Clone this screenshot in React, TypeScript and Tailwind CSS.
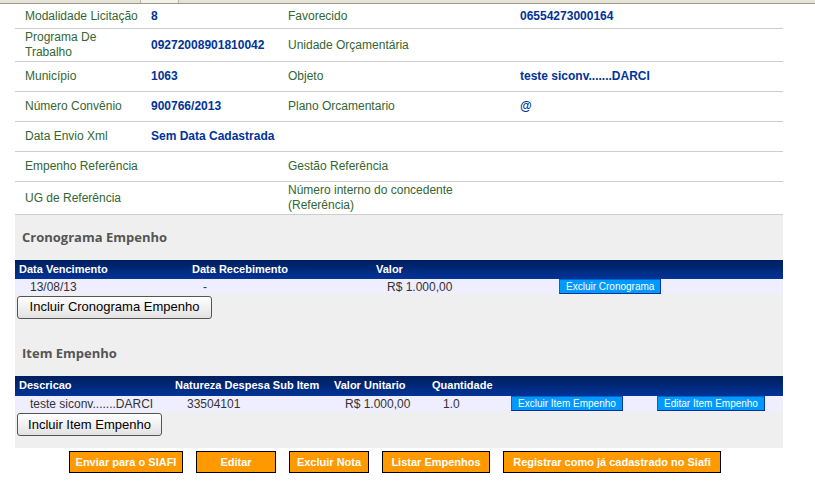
import React from 'react';

const font = { fontFamily: '"Liberation Sans", Arial, sans-serif' };

type Cell = { label: string; value?: string; label2?: string; value2?: string; h: string };

const rows: Cell[] = [
  { label: 'Modalidade Licitação', value: '8', label2: 'Favorecido', value2: '06554273000164', h: 'h-[25px]' },
  { label: 'Programa De Trabalho', value: '09272008901810042', label2: 'Unidade Orçamentária', h: 'h-[33px]' },
  { label: 'Município', value: '1063', label2: 'Objeto', value2: 'teste siconv.......DARCI', h: 'h-[30px]' },
  { label: 'Número Convênio', value: '900766/2013', label2: 'Plano Orcamentario', value2: '@', h: 'h-[30px]' },
  { label: 'Data Envio Xml', value: 'Sem Data Cadastrada', h: 'h-[30px]' },
  { label: 'Empenho Referência', label2: 'Gestão Referência', h: 'h-[30px]' },
  { label: 'UG de Referência', label2: 'Número interno do concedente (Referência)', h: 'h-[33px]' },
];

const SmallBlue: React.FC<{ children: React.ReactNode }> = ({ children }) => (
  <button className="h-[15px] px-[6px] bg-[#0099ff] text-white text-[10px] leading-[13px] border border-[#0066cc] border-r-[#003399] border-b-[#003399]">
    {children}
  </button>
);

const GreyButton: React.FC<{ children: React.ReactNode; w: string }> = ({ children, w }) => (
  <button
    className={`${w} h-[23px] ml-[2px] rounded-[3px] border border-[#555] bg-gradient-to-b from-white to-[#e2e2e2] text-[13px] leading-[20px] text-black`}
  >
    {children}
  </button>
);

const Heading: React.FC<{ children: React.ReactNode; h: string; pt: string }> = ({ children, h, pt }) => (
  <div className={`${h} ${pt} pl-[7px]`}>
    <div className="text-[13px] leading-[16px] font-bold text-[#555555]" style={{ fontFamily: '"Open Sans", "DejaVu Sans", sans-serif' }}>
      {children}
    </div>
  </div>
);

export default function App() {
  return (
    <div className="w-[815px] h-[490px] bg-white overflow-hidden" style={font}>
      <div className="relative h-[4px] bg-[#e6e3d6] border-b border-[#9c9a86]">
        <div className="absolute left-[140px] top-0 w-[39px] h-[3px] bg-[#f2f0e8] border-x border-[#b8b5a4]" />
      </div>
      <div className="ml-[15px] w-[768px]">
        {rows.map((r, i) => (
          <div
            key={i}
            className={`${r.h} grid grid-cols-[126px_137px_232px_263px] items-center pl-[10px] border-b border-[#cccccc] text-[12px] leading-[15px]`}
          >
            <div className="text-[#336633] pr-[8px]">{r.label}</div>
            <div className="text-[#003399] font-bold">{r.value}</div>
            <div className="text-[#336633] pr-[10px]">{r.label2}</div>
            <div className="text-[#003399] font-bold">{r.value2}</div>
          </div>
        ))}

        <div className="bg-[#efefef] pb-[12px]">
          <Heading h="h-[45px]" pt="pt-[14px]">Cronograma Empenho</Heading>
          <div className="h-[19px] bg-gradient-to-b from-[#001f5c] to-[#003399] grid grid-cols-[173px_184px_180px_1fr] items-center text-white font-bold text-[11px]">
            <div className="pl-[4px]">Data Vencimento</div>
            <div className="pl-[4px]">Data Recebimento</div>
            <div className="pl-[4px]">Valor</div>
            <div />
          </div>
          <div className="h-[15px] bg-[#eeeeff] grid grid-cols-[173px_184px_180px_1fr] items-center text-[12px] leading-[14px] text-[#333333]">
            <div className="pl-[15px]">13/08/13</div>
            <div className="pl-[15px]">-</div>
            <div className="pl-[15px]">R$ 1.000,00</div>
            <div className="pl-[7px] flex items-center">
              <SmallBlue>Excluir Cronograma</SmallBlue>
            </div>
          </div>
          <div>
            <GreyButton w="w-[195px]">Incluir Cronograma Empenho</GreyButton>
          </div>

          <Heading h="h-[57px]" pt="pt-[26px]">Item Empenho</Heading>
          <div className="h-[20px] bg-gradient-to-b from-[#001f5c] to-[#003399] grid grid-cols-[156px_159px_98px_83px_146px_1fr] items-center text-white font-bold text-[11px]">
            <div className="pl-[4px]">Descricao</div>
            <div className="pl-[4px]">Natureza Despesa Sub Item</div>
            <div className="pl-[4px]">Valor Unitario</div>
            <div className="pl-[4px]">Quantidade</div>
            <div />
            <div />
          </div>
          <div className="h-[16px] bg-[#eeeeff] grid grid-cols-[156px_159px_98px_83px_146px_1fr] items-center text-[12px] leading-[14px] text-[#333333]">
            <div className="pl-[15px]">teste siconv.......DARCI</div>
            <div className="pl-[16px]">33504101</div>
            <div className="pl-[15px]">R$ 1.000,00</div>
            <div className="pl-[15px]">1.0</div>
            <div className="flex items-center">
              <SmallBlue>Excluir Item Empenho</SmallBlue>
            </div>
            <div className="flex items-center">
              <SmallBlue>Editar Item Empenho</SmallBlue>
            </div>
          </div>
          <div>
            <GreyButton w="w-[145px]">Incluir Item Empenho</GreyButton>
          </div>
        </div>

        <div className="mt-[3px] pl-[54px] flex gap-[13px]">
          {[
            ['Enviar para o SIAFI', 'w-[114px]'],
            ['Editar', 'w-[80px]'],
            ['Excluir Nota', 'w-[80px]'],
            ['Listar Empenhos', 'w-[108px]'],
            ['Registrar como já cadastrado no Siafi', 'w-[218px]'],
          ].map(([t, w]) => (
            <button
              key={t}
              className={`${w} h-[22px] bg-[#ff9900] border border-black text-white font-bold text-[11px] leading-[20px] whitespace-nowrap`}
            >
              {t}
            </button>
          ))}
        </div>
      </div>
    </div>
  );
}
